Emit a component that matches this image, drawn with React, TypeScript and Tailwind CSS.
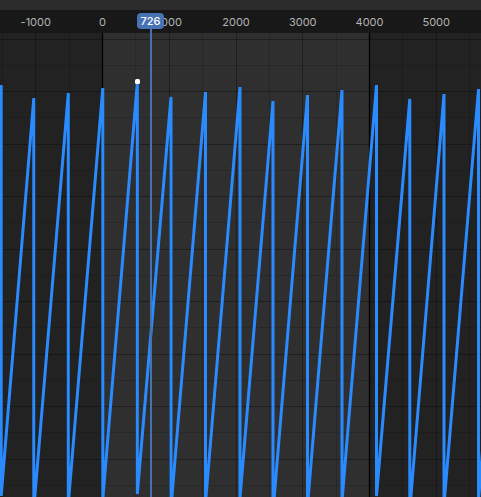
import React from "react";

const PX = 0.06675;
const X0 = 102.5;
const xOf = (v: number) => X0 + v * PX;
const TOP = 33;

const peaks: [number, number][] = [
  [-32.5, 90],
  [1.2, 85],
  [33.8, 98],
  [68.3, 93],
  [102.8, 88],
  [137.3, 83],
  [171, 97],
  [205.5, 92],
  [240, 87],
  [273, 101],
  [307.5, 95],
  [342, 90],
  [376.5, 85],
  [409.8, 99],
  [444, 94],
  [478.5, 89],
  [512, 84],
];

const labels = [-1000, 0, 1000, 2000, 3000, 4000, 5000];

export default function App() {
  const vMinor: number[] = [];
  const vMajor: number[] = [];
  for (let v = -1500; v <= 6000; v += 500) {
    const x = Math.round(xOf(v) - 0.5) + 0.5;
    if (v % 1000 === 0) vMajor.push(x);
    else vMinor.push(x);
  }
  const hMajor: number[] = [];
  const hMinor: number[] = [];
  for (let i = 0; i < 10; i++) {
    hMajor.push(Math.round(38.5 + i * 52.5 - TOP) + 0.5);
    hMinor.push(Math.round(38.5 + i * 52.5 + 26.25 - TOP) + 0.5);
  }

  let d = "";
  peaks.forEach(([x, t], i) => {
    const top = t - TOP;
    const bot = t + 411 - TOP;
    d += (i === 0 ? "M" : "L") + x + " " + top + " L" + x + " " + bot + " ";
  });

  return (
    <div
      className="relative flex h-[497px] w-[481px] flex-col overflow-hidden bg-[#222222]"
      style={{ fontFamily: "Inter, 'Liberation Sans', sans-serif" }}
    >
      <div className="h-[10px] shrink-0 bg-[#2c2c2c]" />
      <div className="relative h-[23px] shrink-0 bg-[#181818]">
        {labels.map((v) => (
          <span
            key={v}
            className="absolute top-[5px] -translate-x-1/2 text-[11px] leading-[14px] text-[#b4b4b4]"
            style={{ left: xOf(v) }}
          >
            {v}
          </span>
        ))}
      </div>
      <div className="relative flex flex-1">
        <div className="w-[103px] bg-[#222222]" />
        <div className="w-[267px] bg-[#2f2f2f]" />
        <div className="flex-1 bg-[#222222]" />
        <svg
          className="absolute inset-0"
          width={481}
          height={464}
          viewBox="0 0 481 464"
        >
          {vMinor.map((x) => (
            <line key={"vm" + x} x1={x} x2={x} y1={0} y2={464} stroke="rgba(0,0,0,0.13)" strokeWidth={1} />
          ))}
          {hMinor.map((y) => (
            <line key={"hm" + y} x1={0} x2={481} y1={y} y2={y} stroke="rgba(0,0,0,0.13)" strokeWidth={1} />
          ))}
          {vMajor.map((x) => (
            <line key={"vM" + x} x1={x} x2={x} y1={0} y2={464} stroke="rgba(0,0,0,0.32)" strokeWidth={1} />
          ))}
          {hMajor.map((y) => (
            <line key={"hM" + y} x1={0} x2={481} y1={y} y2={y} stroke="rgba(0,0,0,0.32)" strokeWidth={1} />
          ))}
          <line x1={102.5} x2={102.5} y1={0} y2={464} stroke="#000" strokeWidth={1.3} />
          <line x1={369.5} x2={369.5} y1={0} y2={464} stroke="#000" strokeWidth={1.3} />
          <path d={d} fill="none" stroke="#2a8bff" strokeWidth={3} strokeLinejoin="miter" strokeMiterlimit={20} />
          <rect x={135} y={81.5 - TOP - 2.5} width={5} height={5} rx={1.5} fill="#ffffff" />
        </svg>
      </div>
      <div className="absolute left-[150px] top-[28px] h-[470px] w-[2px] bg-[#4672b0]" />
      <div className="absolute left-[137px] top-[13px] flex h-[16px] w-[27px] items-center justify-center rounded-[4px] bg-[#4772b3] text-[11px] font-medium leading-none text-white">
        726
      </div>
    </div>
  );
}
